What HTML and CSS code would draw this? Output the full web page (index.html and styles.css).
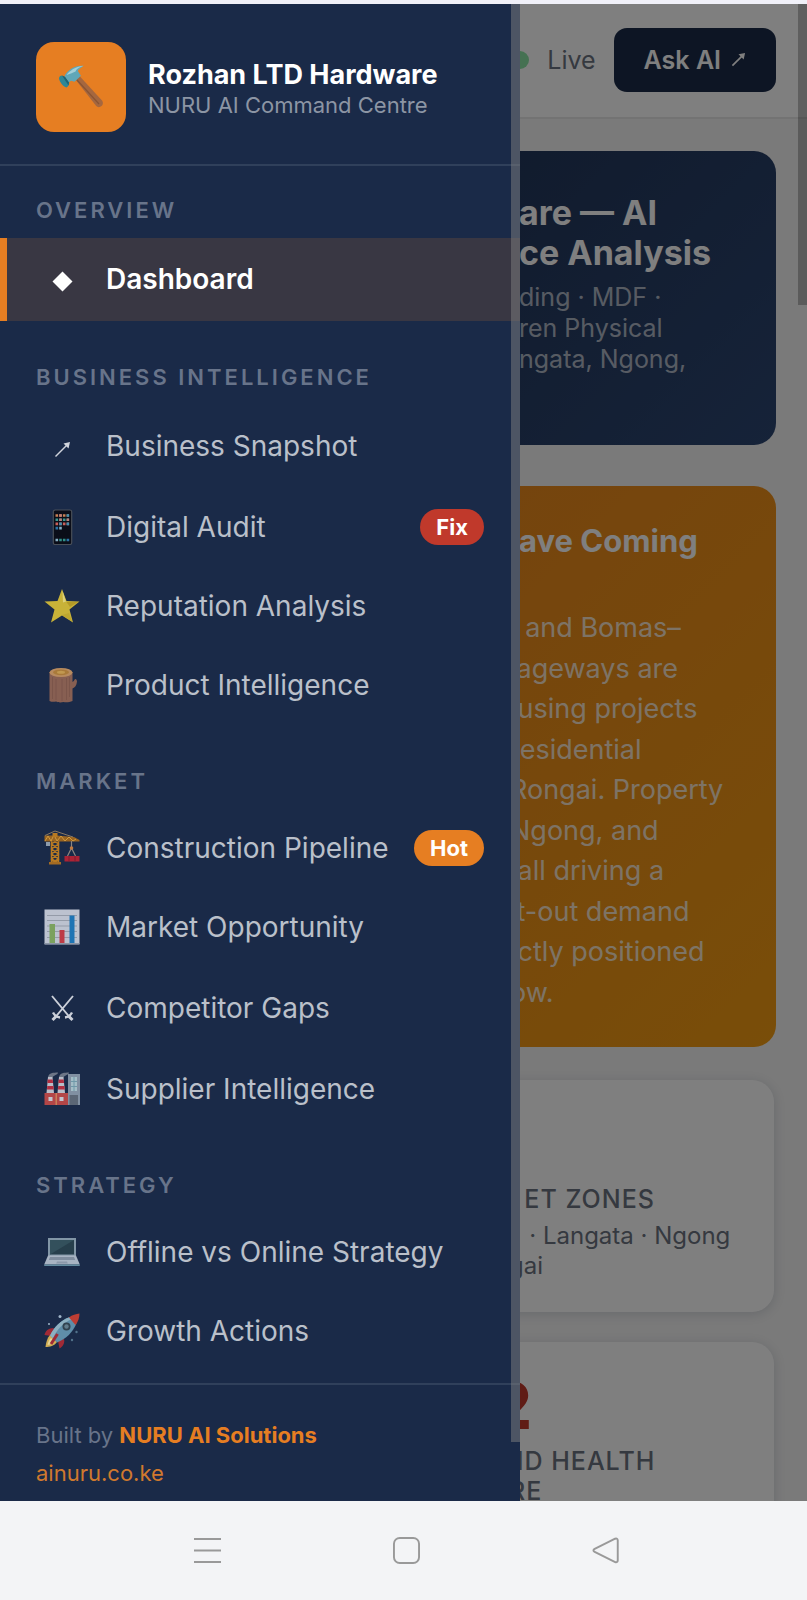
FILE: index.html
```html
<!DOCTYPE html>
<html lang="en">
<head>
<meta charset="utf-8">
<meta name="viewport" content="width=device-width, initial-scale=1">
<title>Rozhan LTD Hardware – NURU AI Command Centre</title>
<link rel="stylesheet" href="styles.css">
</head>
<body>
<div class="stage">
  <main class="page">
    <header class="topbar">
      <span class="live"><span class="live-dot"></span>Live</span>
      <button class="ask" type="button">Ask AI
        <svg class="ask-arrow" viewBox="0 0 16 16" aria-hidden="true"><path d="M1.500 14.500 12.500 3.500" fill="none" stroke="currentColor" stroke-width="1.800"/><path d="M15 1 13.500 8 8 2.500z" fill="currentColor"/></svg>
      </button>
    </header>
    <div class="content">
      <section class="hero">
        <h1 class="hero-title">are — AI<br>ce Analysis</h1>
        <p class="hero-text">ding · MDF ·<br>ren Physical<br>ngata, Ngong,</p>
      </section>
      <section class="alert">
        <h2 class="alert-title">ave Coming</h2>
        <p class="alert-text">&nbsp;&nbsp;and Bomas–<br>iageways are<br>&nbsp;using projects<br>residential<br>Rongai. Property<br>Ngong, and<br>&nbsp;all driving a<br>it-out demand<br>&nbsp;ctly positioned<br>ow.</p>
      </section>
      <section class="stats">
        <article class="stat">
          <div class="stat-value"></div>
          <div class="stat-label">&nbsp;&nbsp;ET ZONES</div>
          <div class="stat-note">&nbsp;&nbsp;&nbsp;· Langata · Ngong<br>gai</div>
        </article>
        <article class="stat">
          <div class="stat-value">2</div>
          <div class="stat-label">&nbsp;ID HEALTH<br>RE</div>
        </article>
      </section>
    </div>
  </main>
  <div class="scrim"></div>
  <span class="page-scroll"></span>

  <aside class="drawer">
    <div class="brand">
      <div class="brand-logo">
        <svg viewBox="0 0 44 44" aria-hidden="true">
          <path d="M16.500 14.500 20.500 11 43 35.500c1.500 1.800 1 4-.5 5.500-1.700 1.600-4 1.500-5.500-.2z" fill="#a5673f"/>
          <path d="M18 15 40 39" stroke="#8a5433" stroke-width="1.200" fill="none"/>
          <path d="M0 13.500c0-2 1.500-3 3-3l6.500 5.500c1.500 2 .2 5.500-2 6.500C4 21.500.500 17 0 13.500z" fill="#2f8796"/>
          <path d="M3 10.500 7 12l3 5-.5 3.500z" fill="#1f6474"/>
          <path d="M5.500 11C8.500 5.500 14.500.500 24.500.800c-1.500 1.700-5 3-5.500 5.500l3 4.500-6.500 6-3.500-1-2 1.500z" fill="#5fa7b8"/>
          <path d="M7.500 10C11 5.500 16 2 24.500.800c-3 1.500-6.500 2.200-8 5.700l-4.500 2z" fill="#a3cfd8"/>
        </svg>
      </div>
      <div class="brand-copy">
        <div class="brand-name">Rozhan LTD Hardware</div>
        <div class="brand-sub">NURU AI Command Centre</div>
      </div>
    </div>

    <nav class="menu">
      <section class="group">
        <h2 class="group-title">OVERVIEW</h2>
        <a class="item item-tall item-active" href="#dashboard">
          <span class="icon"><svg viewBox="0 0 36 36" aria-hidden="true"><path d="M18.500 10.500 28.500 20.500 18.500 30.500 8.500 20.500z" fill="#fff"/></svg></span>
          <span class="label">Dashboard</span>
        </a>
      </section>
      <section class="group">
        <h2 class="group-title">BUSINESS INTELLIGENCE</h2>
        <a class="item item-tall" href="#snapshot">
          <span class="icon"><svg viewBox="0 0 36 36" aria-hidden="true"><path d="M11.500 28.500 23 17" fill="none" stroke="#d0d4dc" stroke-width="1.400"/><path d="M26 14 24.500 20.500 19.500 15.500z" fill="#d0d4dc"/></svg></span>
          <span class="label">Business Snapshot</span>
        </a>
        <a class="item" href="#audit">
          <span class="icon"><svg viewBox="0 0 36 36" aria-hidden="true">
            <rect x="9.300" y="1" width="18.400" height="34.500" rx="1.800" fill="#0a0d18" stroke="#494f58" stroke-width="1.200"/>
            <g stroke-width="2.600" fill="none">
              <path d="M11.500 6.500h13.500" stroke="#c98155" stroke-dasharray="2.600 1.100"/>
              <path d="M11.500 10.700h13.500" stroke="#3c9a92" stroke-dasharray="2.600 1.100"/>
              <path d="M15.200 10.700h2.600M22.600 10.700h2.600M15.200 6.500h2.600" stroke="#bd7d78"/>
              <path d="M11.500 14.900h13.500" stroke="#c9605a" stroke-dasharray="2.600 1.100"/>
              <path d="M15.200 14.900h2.600M22.600 14.900h2.600M22.600 6.500h2.600" stroke="#3f8fb0"/>
              <path d="M11.500 19.100h2.600M22.600 31h2.600" stroke="#2b74a8"/><path d="M15.200 19.100h2.600M11.500 31h2.600" stroke="#86aec4"/><path d="M15.200 31h6.300" stroke="#318f87" stroke-dasharray="2.600 1.100"/>
            </g>
          </svg></span>
          <span class="label">Digital Audit</span>
          <span class="badge badge-red">Fix</span>
        </a>
        <a class="item" href="#reputation">
          <span class="icon"><svg viewBox="0 0 36 36" aria-hidden="true">
            <path d="M18 1 22.500 13 35.500 13.500 25.500 21.500 29 34.500 18 27.500 7 34.500 10.500 21.500 .5 13.500 13.500 13z" fill="#c8b238"/>
            <path d="M18.500 3 22 13.500 19 14.500z" fill="#ddd17c"/><path d="M22.500 14 34 14 26 19z" fill="#b39a27"/><path d="M18 27 28 33.500 25 25z" fill="#bea72f"/>
          </svg></span>
          <span class="label">Reputation Analysis</span>
        </a>
        <a class="item" href="#products">
          <span class="icon"><svg viewBox="0 0 36 36" aria-hidden="true">
            <path d="M5.500 5h23v10c1-.5 2-2 2.500-3 1-.5 2 1 2 2.500-.5 4-2 6-4.500 7V34c-3 1.500-7 1.500-9 1-3 .8-6 .3-7.500-.5-2 .5-4.500.5-6.500-.5z" fill="#875f52"/>
            <path d="M8.500 10v22M12 12v21M18 12v22M22.500 11v22M25.500 10v20" stroke="#7b554a" stroke-width="1" fill="none"/>
            <ellipse cx="17" cy="5.500" rx="11.500" ry="4.500" fill="#b88b5f"/>
            <ellipse cx="17" cy="5.300" rx="8" ry="2.900" fill="#a97a3a"/><ellipse cx="17" cy="5.200" rx="4" ry="1.500" fill="#c19850"/>
          </svg></span>
          <span class="label">Product Intelligence</span>
        </a>
      </section>
      <section class="group">
        <h2 class="group-title">MARKET</h2>
        <a class="item" href="#pipeline">
          <span class="icon"><svg viewBox="0 0 36 36" aria-hidden="true">
            <path d="M7.500 33V9h7v24M7.500 9l7 5-7 5 7 5-7 5 7 4M14.500 9l-7 5 7 5-7 5 7 5-7 4" fill="none" stroke="#b97a22" stroke-width="1.500"/>
            <path d="M.5 5.500h12L30 7l5.500 3v1.500H.5z" fill="#9a6420"/><path d="M1 11 4 6l3 5 3-6 3 6 4-5 4 5 4-4 4 4 3-2" fill="none" stroke="#d19a3d" stroke-width="1"/>
            <path d="M1 5.500 11 1l18 6" fill="none" stroke="#8b7860" stroke-width="1"/><path d="M8.500 3h5v4h-5z" fill="#b97a22"/>
            <path d="M2 12h4v4H2z" fill="#8d9bab"/><path d="M5 32h12v2.500H5z" fill="#a36a22"/>
            <path d="M27.500 11v7M27.500 18l-4 8M27.500 18l4 8" fill="none" stroke="#8d8580" stroke-width="1.200"/><circle cx="27.500" cy="18" r="1.800" fill="#c07a40"/>
            <path d="M20.500 26h15v5.500h-15z" fill="#ad2335"/><path d="M25 26v5.500M31 26v5.500" stroke="#7c1d30" stroke-width="1"/>
          </svg></span>
          <span class="label">Construction Pipeline</span>
          <span class="badge badge-orange">Hot</span>
        </a>
        <a class="item" href="#opportunity">
          <span class="icon"><svg viewBox="0 0 36 36" aria-hidden="true">
            <path d="M.5.500h35v35H.5z" fill="#bcc2cf"/><path d="M3 6.500h30M3 11.500h30M3 17h30M3 22.500h30M3 28.500h30" stroke="#949ba8" stroke-width="1"/>
            <path d="M5.500 15h5.500v20H5.500z" fill="#7ba15e"/><path d="M15.500 21h5v14h-5z" fill="#bd3c46"/><path d="M25.500 6.500h5V35h-5z" fill="#1e74b4"/><path d="M.5 34.500h35" stroke="#8b96a5"/>
          </svg></span>
          <span class="label">Market Opportunity</span>
        </a>
        <a class="item item-tall" href="#gaps">
          <span class="icon"><svg viewBox="0 0 36 36" aria-hidden="true"><g fill="none" stroke="#ccd0d9" stroke-width="1.900"><path d="M8 6 26 27.500M29 6 11 27.500"/><path d="M9 22.500c1.500 3 3.500 4.500 7 5M28 22.500c-1.500 3-3.500 4.500-7 5" stroke-width="2.400"/><path d="M12 26.500 8.500 30M25 26.500 28.500 30" stroke-width="3"/></g></svg></span>
          <span class="label">Competitor Gaps</span>
        </a>
        <a class="item" href="#suppliers">
          <span class="icon"><svg viewBox="0 0 36 36" aria-hidden="true">
            <path d="M4 6C5 2 9 1.500 14 1.500c-.5 3-4 2-5.500 5zM15 6c1-4 5-4.500 10-4.500-.5 3-4 2-5.500 5z" fill="#6d7687"/>
            <path d="M4 6h4.500L10 22H2.500zM15 6h4.500L21 22h-7.500z" fill="#b9bdc8"/>
            <path d="M3.700 8.500h5l.4 3.500H3.400zM3.200 15h6.200l.4 3.500H3zM14.700 8.500h5l.4 3.500h-5.700zM14.200 15h6.200l.4 3.500H14z" fill="#b22f42"/>
            <path d="M24 3h12v31H24z" fill="#8190a2"/><path d="M27 6h6v14h-6z" fill="#a4bdc6"/><path d="M27 10.500h6M27 15.500h6M30 6v14" stroke="#6f98a8"/><path d="M25.500 24H34v10h-8.500z" fill="#5b6675"/>
            <path d="M.5 22H24v12H.5z" fill="#b34647"/><path d="M11.500 22h1.500v12h-1.500z" fill="#c98058"/><path d="M4.500 26h4v4h-4zM15.500 26h4v4h-4z" fill="#c2c5cf"/>
          </svg></span>
          <span class="label">Supplier Intelligence</span>
        </a>
      </section>
      <section class="group">
        <h2 class="group-title">STRATEGY</h2>
        <a class="item" href="#strategy">
          <span class="icon"><svg viewBox="0 0 36 36" aria-hidden="true">
            <path d="M4 4h28v18H4z" fill="#8296a6"/><path d="M6 6h24v14.500H6z" fill="#273f4c"/><path d="M6 6h24L6 20.500z" fill="#33505c"/>
            <path d="M4 21.500h28l3.800 9H.2z" fill="#a8b3c2"/><path d="M6 23h24l1.200 3H4.800z" fill="#7f8d9e"/><path d="M13 27.500h10l.8 2H12.200z" fill="#8b98a9"/><path d="M.2 30.500h35.600V32H.2z" fill="#648ba0"/>
          </svg></span>
          <span class="label">Offline vs Online Strategy</span>
        </a>
        <a class="item" href="#growth">
          <span class="icon"><svg viewBox="0 0 36 36" aria-hidden="true">
            <path d="M10 15C4 15 1.500 18 .5 22l7 1zM20 26c1 4-1 7.500-4.500 9.500L14 28z" fill="#a02a36"/>
            <path d="M6 22C3 25 2 30 1.500 34c4 0 9-1 11.500-5z" fill="#d0ad54"/><path d="M7 25c-2 2-3 4.500-3.500 7 3-.5 5-1.500 7-4z" fill="#e6d69a"/>
            <path d="M26 4C17 7 10 14 6 22.500L13 29.500C22 26 29 19 32.500 10.500z" fill="#5f8ea9"/><path d="M26 4C17 7 10 14 6 22.500l3 3C13 16 19 10 28 6z" fill="#8db0c1"/>
            <path d="M25 4.500C28 2 32 .800 35.500.500 35.500 4.500 34 9 31.500 12z" fill="#be3d33"/>
            <circle cx="22.500" cy="13.500" r="4" fill="#31424f"/><circle cx="22.500" cy="13.500" r="2.200" fill="#617c8b"/>
            <path d="M13.500 21 7 31" stroke="#a02a36" stroke-width="3"/>
            <g fill="#9fb4c8"><circle cx="16" cy="3.500" r="1.500"/><circle cx="5" cy="11" r="1"/></g><g fill="#52728b"><circle cx="32.500" cy="19" r="1.200"/><circle cx="28" cy="27" r="1.200"/></g>
          </svg></span>
          <span class="label">Growth Actions</span>
        </a>
      </section>
    </nav>

    <footer class="credit">
      <div>Built by <strong class="credit-name">NURU AI Solutions</strong></div>
      <a class="credit-link" href="#site">ainuru.co.ke</a>
    </footer>
    <span class="drawer-scroll"></span>
  </aside>
</div>

<div class="sysbar">
  <button class="sys" type="button" aria-label="Recent apps"><svg viewBox="0 0 28 28"><path d="M0 2h28M0 14h28M0 26h28"/></svg></button>
  <button class="sys" type="button" aria-label="Home"><svg viewBox="0 0 28 28"><rect x="1" y="1" width="26" height="26" rx="6"/></svg></button>
  <button class="sys" type="button" aria-label="Back"><svg viewBox="0 0 28 28"><path d="M24 1.800 2.800 12.300q-2.600 1.600 0 3.200L24 26q2.500.8 2.700-1.700V3.500Q26.500 1 24 1.800z"/></svg></button>
</div>
</body>
</html>
```
FILE: styles.css
```css
:root {
  --navy: #1a2a48;
  --orange: #e67e22;
  --red: #c0392b;
  --drawer: 520px;
  --text-start: 519px;
}

* { box-sizing: border-box; }

body {
  margin: 0;
  height: 100vh;
  display: flex;
  flex-direction: column;
  border-top: 4px solid #f0f0f8;
  background: #f3f4f6;
  font-family: Inter, "Liberation Sans", sans-serif;
}

h1, h2, p { margin: 0; }
a { color: inherit; text-decoration: none; }
svg { display: block; }

.stage {
  flex: 1;
  min-height: 0;
  position: relative;
  overflow: hidden;
  background: #f4f4f4;
}

/* Page behind the drawer */
.topbar {
  display: flex;
  align-items: center;
  justify-content: flex-end;
  gap: 18px;
  height: 115px;
  padding: 0 31px 2px;
  border-bottom: 2px solid #e6e6e6;
  background: #fff;
}
.live {
  display: flex;
  align-items: center;
  gap: 18px;
  color: #6b7280;
  font-size: 25px;
}
.live-dot {
  width: 18px;
  height: 18px;
  border-radius: 50%;
  background: #8be3a4;
}
.ask {
  display: flex;
  align-items: center;
  gap: 10px;
  height: 64px;
  padding: 0 30px;
  border: 0;
  border-radius: 13px;
  background: var(--navy);
  color: #fff;
  font: 600 25px Inter, sans-serif;
}
.ask-arrow {
  width: 15px;
  height: 15px;
}

.content { padding: 32px 31px; }

.hero, .alert {
  padding-left: calc(var(--text-start) - 31px);
  border-radius: 22px;
  color: #fff;
  white-space: nowrap;
}
.hero {
  padding-top: 42px;
  padding-bottom: 70px;
  background: linear-gradient(135deg, #1a2a48, #2c4672);
}
.hero-title {
  margin-bottom: 9px;
  font-size: 34px;
  line-height: 40px;
}
.hero-text {
  font-size: 25px;
  line-height: 31px;
  color: rgba(255, 255, 255, .65);
}
.alert {
  margin-top: 41px;
  padding-top: 37px;
  padding-bottom: 34px;
  background: linear-gradient(135deg, #e67e22, #f39c12);
}
.alert-title {
  min-height: 85px;
  font-size: 31px;
  line-height: 36px;
}
.alert-text {
  margin-left: -9px;
  font-size: 27px;
  line-height: 1.5;
  color: rgba(255, 255, 255, .8);
}

.stats {
  display: grid;
  gap: 30px;
  margin-top: 33px;
  padding-right: 2px;
}
.stat {
  min-height: 232px;
  padding: 36px 36px 31px calc(var(--text-start) - 41px);
  border-radius: 22px;
  background: #fff;
  box-shadow: 0 2px 12px rgba(26, 42, 72, .16);
  color: #6b7280;
  font-size: 25px;
  line-height: 30px;
  white-space: nowrap;
}
.stat-value {
  height: 68px;
  margin-left: -18px;
  font-size: 64px;
  line-height: 56px;
  font-weight: 800;
  color: var(--red);
}
.stat-label {
  font-weight: 500;
  letter-spacing: 1px;
}
.stat-note {
  margin-top: 7px;
  font-size: 24px;
}

.scrim {
  position: absolute;
  inset: 0;
  background: rgba(0, 0, 0, .5);
}
.page-scroll {
  position: absolute;
  top: 0;
  right: 0;
  width: 9px;
  height: 301px;
  background: rgba(0, 0, 0, .25);
}

/* Drawer */
.drawer {
  position: absolute;
  inset: 0 auto 0 0;
  width: var(--drawer);
  overflow: hidden;
  background: var(--navy);
}
.drawer-scroll {
  position: absolute;
  top: 0;
  right: 0;
  width: 9px;
  height: 1438px;
  background: rgba(128, 128, 128, .5);
}
.brand {
  display: flex;
  align-items: center;
  gap: 22px;
  padding: 38px 36px 32px;
  border-bottom: 2px solid #30405b;
}
.brand-logo {
  display: grid;
  place-items: center;
  width: 90px;
  height: 90px;
  border-radius: 18px;
  background: var(--orange);
}
.brand-logo svg { width: 44px; height: 44px; }
.brand-copy { padding-top: 3px; }
.brand-name {
  font-size: 27px;
  line-height: 32px;
  font-weight: 700;
  color: #fff;
}
.brand-sub {
  font-size: 22px;
  line-height: 28px;
  color: #8c95a4;
}

.group { margin-bottom: 12px; }
.group-title {
  padding: 30px 36px 14px;
  font-size: 22px;
  line-height: 28px;
  font-weight: 600;
  letter-spacing: 3px;
  color: #68748a;
}
.item {
  display: flex;
  align-items: center;
  gap: 22px;
  height: 79px;
  padding: 0 36px 2px 37px;
  border-left: 7px solid transparent;
  font-size: 28px;
  color: #bac0ca;
}
.item-tall { height: 83px; }
.item-active {
  border-left-color: var(--orange);
  background: #393743;
  color: #fff;
  font-weight: 600;
}
.icon {
  width: 40px;
  flex: none;
}
.icon svg {
  width: 36px;
  height: 36px;
}
.label {
  flex: 1;
  white-space: nowrap;
}
.badge {
  height: 36px;
  padding: 0 16px;
  border-radius: 18px;
  font-size: 22px;
  line-height: 36px;
  font-weight: 700;
  color: #fff;
}
.badge-red { background: var(--red); }
.badge-orange { background: var(--orange); }

.credit {
  padding: 31px 36px;
  border-top: 2px solid #30405b;
  font-size: 22px;
  line-height: 38px;
  color: #68748a;
}
.credit-name { color: var(--orange); }
.credit-link { color: #d0792e; }

/* System navigation */
.sysbar {
  display: flex;
  align-items: center;
  justify-content: center;
  gap: 172px;
  height: 99px;
  padding-left: 5px;
}
.sys {
  width: 27px;
  height: 27px;
  padding: 0;
  border: 0;
  background: none;
}
.sys svg {
  width: 27px;
  height: 27px;
  fill: none;
  stroke: #999;
  stroke-width: 2;
}
```
